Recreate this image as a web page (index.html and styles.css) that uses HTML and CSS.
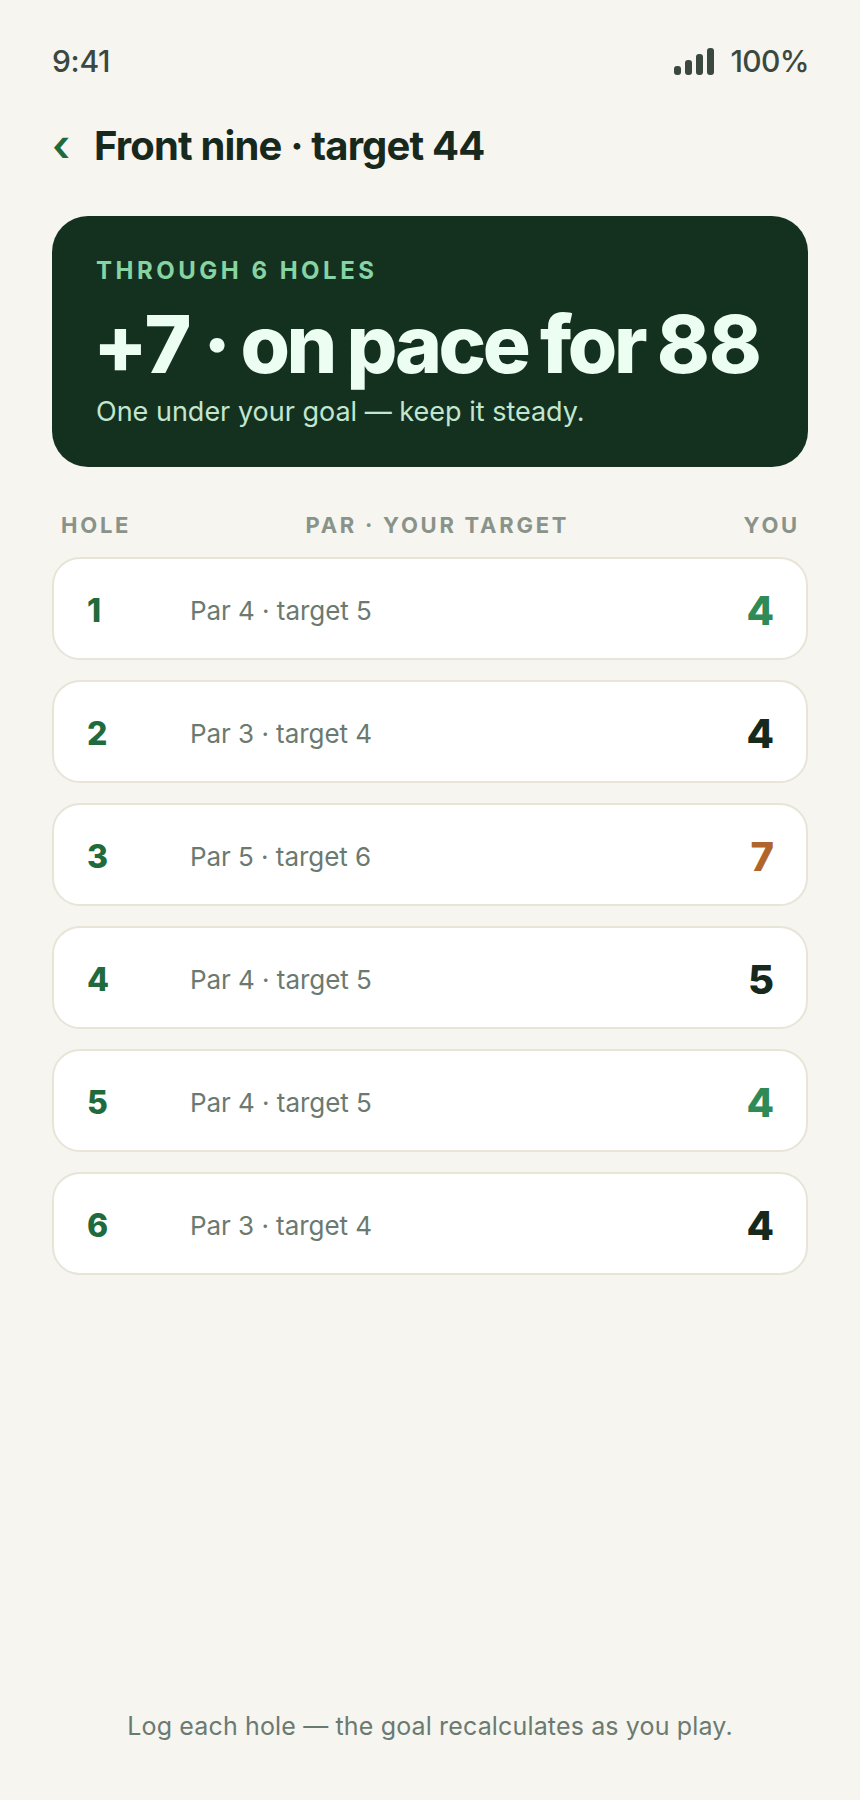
FILE: index.html
```html
<!DOCTYPE html>
<html lang="en">
<head>
    <meta charset="UTF-8">
    <meta name="viewport" content="width=device-width, initial-scale=1.0">
    <title>Front nine</title>
    <link rel="stylesheet" href="styles.css">
</head>
<body>
    <div class="screen">
        <div class="status-bar">
            <span>9:41</span>
            <div class="status-right">
                <div class="signal">
                    <i class="bar-1"></i>
                    <i class="bar-2"></i>
                    <i class="bar-3"></i>
                    <i class="bar-4"></i>
                </div>
                <span>100%</span>
            </div>
        </div>

        <div class="title-row">
            <span class="back">‹</span>
            <h1>Front nine · target 44</h1>
        </div>

        <div class="hero">
            <div class="hero-label">THROUGH 6 HOLES</div>
            <div class="hero-title"><span class="hero-num">+7</span> · on pace for <span class="hero-num">88</span></div>
            <div class="hero-sub">One under your goal — keep it steady.</div>
        </div>

        <div class="table-head">
            <span>HOLE</span>
            <span>PAR · YOUR TARGET</span>
            <span>YOU</span>
        </div>

        <div class="holes">
            <div class="hole">
                <span class="hole-num">1</span>
                <span class="hole-par">Par 4 · target 5</span>
                <span class="hole-you under">4</span>
            </div>
            <div class="hole">
                <span class="hole-num">2</span>
                <span class="hole-par">Par 3 · target 4</span>
                <span class="hole-you">4</span>
            </div>
            <div class="hole">
                <span class="hole-num">3</span>
                <span class="hole-par">Par 5 · target 6</span>
                <span class="hole-you over">7</span>
            </div>
            <div class="hole">
                <span class="hole-num">4</span>
                <span class="hole-par">Par 4 · target 5</span>
                <span class="hole-you">5</span>
            </div>
            <div class="hole">
                <span class="hole-num">5</span>
                <span class="hole-par">Par 4 · target 5</span>
                <span class="hole-you under">4</span>
            </div>
            <div class="hole">
                <span class="hole-num">6</span>
                <span class="hole-par">Par 3 · target 4</span>
                <span class="hole-you">4</span>
            </div>
        </div>

        <div class="footnote">Log each hole — the goal recalculates as you play.</div>
    </div>
</body>
</html>
```

FILE: styles.css
```css
* {
    box-sizing: border-box;
}
body {
    font-family: 'Inter', sans-serif;
    margin: 0;
    padding: 0;
    background-color: #f6f5f0;
    color: #16301f;
}
.screen {
    height: 1800px;
    padding: 0 52px;
    display: flex;
    flex-direction: column;
}
.status-bar {
    display: flex;
    justify-content: space-between;
    align-items: center;
    height: 34px;
    margin-top: 44px;
    font-size: 30px;
    font-weight: 500;
    letter-spacing: -0.3px;
    color: #3a483f;
}
.status-right {
    display: flex;
    align-items: center;
    gap: 16px;
    margin-right: -1px;
    letter-spacing: -0.6px;
}
.signal {
    display: flex;
    align-items: flex-end;
    gap: 4px;
    height: 27px;
}
.signal i {
    display: block;
    width: 7px;
    border-radius: 3px;
    background: #3a483f;
}
.bar-1 { height: 9px; }
.bar-2 { height: 15px; }
.bar-3 { height: 21px; }
.bar-4 { height: 27px; }
.title-row {
    display: flex;
    align-items: center;
    gap: 28px;
    margin-top: 42px;
    height: 50px;
}
.back {
    font-size: 44px;
    font-weight: 600;
    line-height: 50px;
    color: #1f6b3c;
    width: 14px;
}
h1 {
    margin: 0;
    font-size: 40px;
    font-weight: 700;
    letter-spacing: -0.85px;
    color: #16291c;
}
.hero {
    margin-top: 46px;
    height: 251px;
    padding: 40px 44px 0;
    background: #14311f;
    border-radius: 36px;
}
.hero-label {
    font-size: 24px;
    line-height: 30px;
    font-weight: 700;
    letter-spacing: 3.5px;
    color: #86d3a3;
}
.hero-title {
    margin: 12px 0 0 -3px;
    font-size: 80px;
    line-height: 92px;
    font-weight: 800;
    letter-spacing: -3.45px;
    word-spacing: -1.4px;
    white-space: nowrap;
    color: #ecfdf1;
}
.hero-num {
    letter-spacing: -1px;
}
.hero-sub {
    margin-top: 6px;
    font-size: 27px;
    line-height: 32px;
    color: #c2e6cf;
}
.table-head {
    display: flex;
    justify-content: space-between;
    margin-top: 45px;
    padding: 0 8px 0 9px;
    font-size: 22px;
    line-height: 26px;
    font-weight: 700;
    letter-spacing: 2.75px;
    color: #8a9389;
}
.holes {
    display: flex;
    flex-direction: column;
    gap: 20px;
    margin-top: 19px;
}
.hole {
    display: flex;
    align-items: center;
    height: 103px;
    padding: 3px 32px 0 33px;
    background: #fff;
    border: 2px solid #e8e4d8;
    border-radius: 28px;
}
.hole-num {
    width: 103px;
    font-size: 32px;
    font-weight: 800;
    color: #1f6b3c;
}
.hole-par {
    flex: 1;
    font-size: 26px;
    letter-spacing: -0.05px;
    color: #6b7a70;
}
.hole-you {
    font-size: 40px;
    font-weight: 800;
    color: #16291c;
}
.hole-you.under {
    color: #2e8b57;
}
.hole-you.over {
    color: #b0652a;
}
.footnote {
    margin-top: auto;
    margin-bottom: 58px;
    text-align: center;
    font-size: 25px;
    letter-spacing: 0.15px;
    line-height: 32px;
    color: #6b7a70;
}
```
